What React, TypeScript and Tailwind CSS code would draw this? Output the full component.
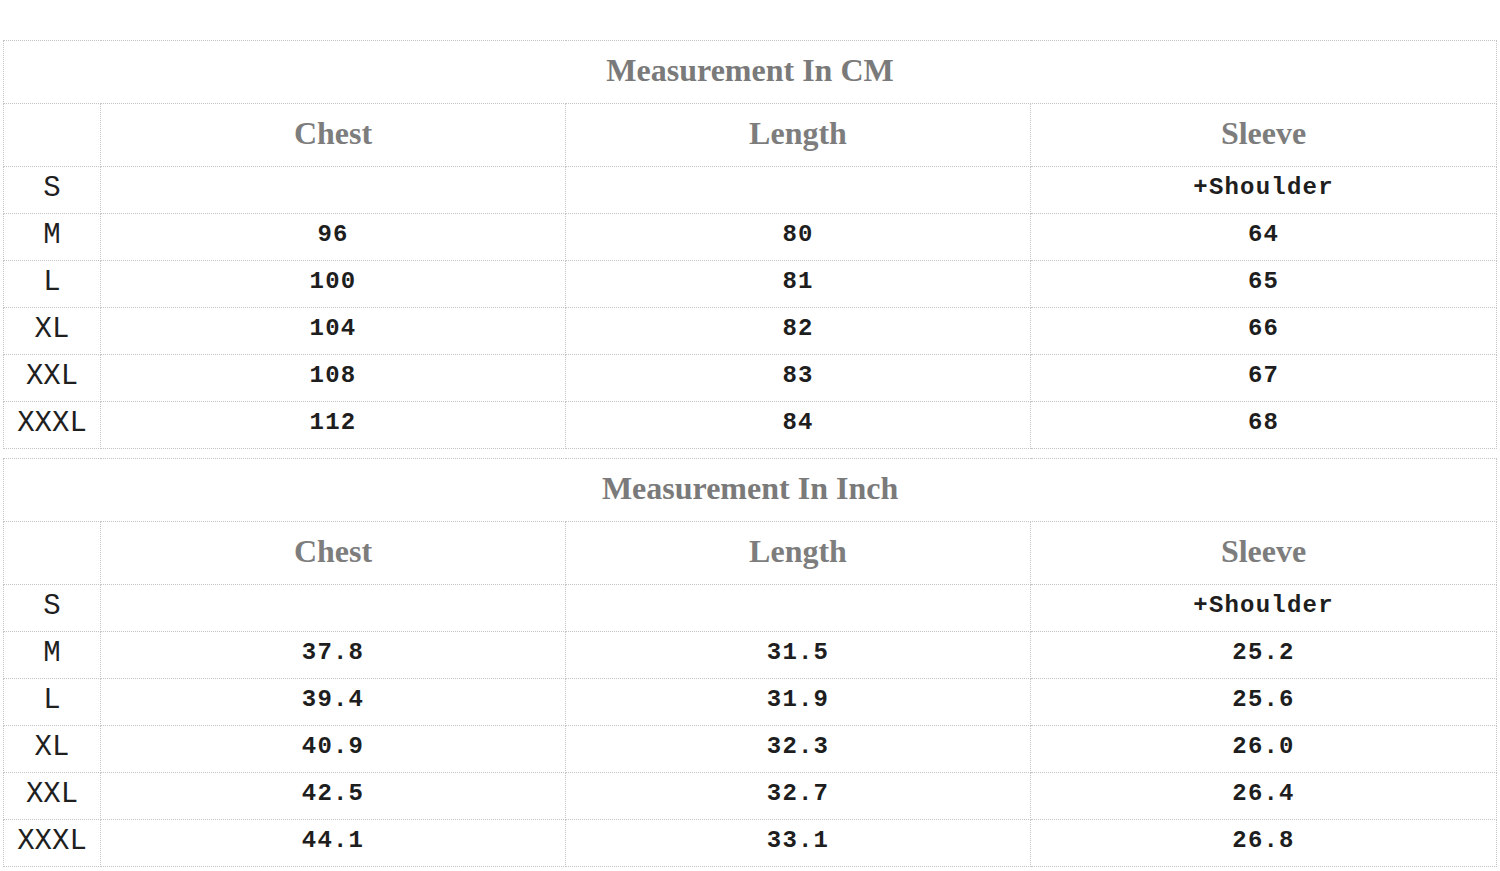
const sizes = ["S", "M", "L", "XL", "XXL", "XXXL"];

const cmRows: string[][] = [
  ["", "", "+Shoulder"],
  ["96", "80", "64"],
  ["100", "81", "65"],
  ["104", "82", "66"],
  ["108", "83", "67"],
  ["112", "84", "68"],
];

const inchRows: string[][] = [
  ["", "", "+Shoulder"],
  ["37.8", "31.5", "25.2"],
  ["39.4", "31.9", "25.6"],
  ["40.9", "32.3", "26.0"],
  ["42.5", "32.7", "26.4"],
  ["44.1", "33.1", "26.8"],
];

const cell = "border border-dotted border-[#c4c4c4] text-center align-middle p-0 pb-[4px] leading-none";
const mono = "font-['Courier_New','Nimbus_Mono_PS','FreeMono','Liberation_Mono',monospace]";

function SizeTable({ title, rows }: { title: string; rows: string[][] }) {
  return (
    <table className="ml-[3px] w-[1493px] table-fixed border-collapse">
      <colgroup>
        <col className="w-[97px]" />
        <col className="w-[465px]" />
        <col className="w-[465px]" />
        <col className="w-[466px]" />
      </colgroup>
      <tbody>
        <tr className="h-[63px]">
          <td
            colSpan={4}
            className={`${cell} font-['Liberation_Serif',serif] text-[32px] font-bold text-[#7a7a7a]`}
          >
            {title}
          </td>
        </tr>
        <tr className="h-[63px]">
          <td className={cell}></td>
          {["Chest", "Length", "Sleeve"].map((h) => (
            <td
              key={h}
              className={`${cell} font-['Liberation_Serif',serif] text-[32px] font-bold text-[#7d7d7d]`}
            >
              {h}
            </td>
          ))}
        </tr>
        {rows.map((r, i) => (
          <tr key={sizes[i]} className="h-[47px]">
            <td className={`${cell} ${mono} text-[29px] text-[#1f1f1f]`}>{sizes[i]}</td>
            {r.map((v, j) => (
              <td
                key={j}
                className={`${cell} ${mono} text-[24px] font-bold tracking-[0.05em] text-[#1e1e1e]`}
              >
                {v}
              </td>
            ))}
          </tr>
        ))}
      </tbody>
    </table>
  );
}

export default function App() {
  return (
    <div className="h-[871px] w-[1500px] overflow-hidden bg-white pt-[40px]">
      <SizeTable title="Measurement In CM" rows={cmRows} />
      <div className="h-[9px]" />
      <SizeTable title="Measurement In Inch" rows={inchRows} />
    </div>
  );
}
